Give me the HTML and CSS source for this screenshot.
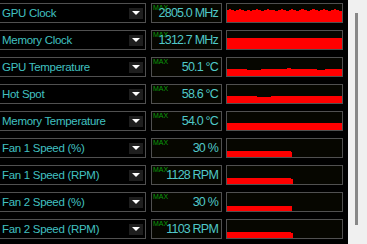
FILE: index.html
```html
<!DOCTYPE html>
<html>
<head>
<meta charset="utf-8">
<link rel="stylesheet" href="styles.css">
</head>
<body>
<div class="panel">
  <div class="row">
    <div class="label"><span>GPU Clock</span><span class="drop"><i></i></span></div>
    <div class="value"><span class="max">MAX</span><span class="num">2805.0 MHz</span></div>
    <div class="graph"><svg viewBox="0 0 115 18" width="115" height="18"><path d="M0 18V6H2V5H4V6H7V7H9V6H12V5H14V6H17V7H20V6H23V7H25V6H29V5H31V6H34V7H37V6H40V5H42V6H45V6H48V7H51V6H54V5H56V6H59V7H62V6H64V5H66V6H69V7H72V6H74V5H77V6H80V7H83V6H85V5H88V6H91V7H93V6H96V5H98V6H101V7H104V6H107V5H109V6H112V7H115V18Z" fill="#ff0000"/></svg></div>
  </div>
  <div class="row">
    <div class="label"><span>Memory Clock</span><span class="drop"><i></i></span></div>
    <div class="value"><span class="max">MAX</span><span class="num">1312.7 MHz</span></div>
    <div class="graph"><svg viewBox="0 0 115 18" width="115" height="18"><rect x="0" y="7" width="115" height="11" fill="#ff0000"/></svg></div>
  </div>
  <div class="row">
    <div class="label"><span>GPU Temperature</span><span class="drop"><i></i></span></div>
    <div class="value"><span class="max">MAX</span><span class="num">50.1 °C</span></div>
    <div class="graph"><svg viewBox="0 0 115 18" width="115" height="18"><path d="M0 18V11H20V12H34V11H60V10H64V11H90V12H98V11H115V18Z" fill="#ff0000"/></svg></div>
  </div>
  <div class="row">
    <div class="label"><span>Hot Spot</span><span class="drop"><i></i></span></div>
    <div class="value"><span class="max">MAX</span><span class="num">58.6 °C</span></div>
    <div class="graph"><svg viewBox="0 0 115 18" width="115" height="18"><path d="M0 18V11H30V12H44V11H115V18Z" fill="#ff0000"/></svg></div>
  </div>
  <div class="row">
    <div class="label"><span>Memory Temperature</span><span class="drop"><i></i></span></div>
    <div class="value"><span class="max">MAX</span><span class="num">54.0 °C</span></div>
    <div class="graph"><svg viewBox="0 0 115 18" width="115" height="18"><path d="M0 18V11H115V18Z" fill="#ff0000"/></svg></div>
  </div>
  <div class="row">
    <div class="label"><span>Fan 1 Speed (%)</span><span class="drop"><i></i></span></div>
    <div class="value"><span class="max">MAX</span><span class="num">30 %</span></div>
    <div class="graph"><svg viewBox="0 0 115 18" width="115" height="18"><path d="M0 18V12H64V13H65V18Z" fill="#ff0000"/></svg></div>
  </div>
  <div class="row">
    <div class="label"><span>Fan 1 Speed (RPM)</span><span class="drop"><i></i></span></div>
    <div class="value"><span class="max">MAX</span><span class="num">1128 RPM</span></div>
    <div class="graph"><svg viewBox="0 0 115 18" width="115" height="18"><path d="M0 18V12H64V13H66V18Z" fill="#ff0000"/></svg></div>
  </div>
  <div class="row">
    <div class="label"><span>Fan 2 Speed (%)</span><span class="drop"><i></i></span></div>
    <div class="value"><span class="max">MAX</span><span class="num">30 %</span></div>
    <div class="graph"><svg viewBox="0 0 115 18" width="115" height="18"><path d="M0 18V13H65V18Z" fill="#ff0000"/></svg></div>
  </div>
  <div class="row">
    <div class="label"><span>Fan 2 Speed (RPM)</span><span class="drop"><i></i></span></div>
    <div class="value"><span class="max">MAX</span><span class="num">1103 RPM</span></div>
    <div class="graph"><svg viewBox="0 0 115 18" width="115" height="18"><path d="M0 18V12H64V13H66V18Z" fill="#ff0000"/></svg></div>
  </div>
</div>
<div class="scrollbar"><div class="thumb"></div></div>
</body>
</html>
```
FILE: styles.css
```css
html, body {
  margin: 0;
  padding: 0;
  background: #000;
  height: 100%;
  overflow: hidden;
}
body {
  display: flex;
  font-family: "Liberation Sans", Arial, sans-serif;
}
.panel {
  width: 348px;
  padding-top: 3px;
  display: flex;
  flex-direction: column;
  gap: 7px;
}
.row {
  display: flex;
  height: 20px;
}
.label {
  box-sizing: border-box;
  width: 148px;
  margin-left: -2px;
  height: 20px;
  border: 1px solid #505050;
  padding-left: 3px;
  padding-right: 2px;
  display: flex;
  align-items: center;
  justify-content: space-between;
  color: #40c0c0;
  font-size: 11.5px;
  letter-spacing: -0.3px;
  white-space: nowrap;
}
.drop {
  width: 14px;
  height: 11px;
  background: #1e1e1e;
  display: flex;
  align-items: center;
  justify-content: center;
}
.drop i {
  width: 0;
  height: 0;
  border-left: 4px solid transparent;
  border-right: 4px solid transparent;
  border-top: 4px solid #fff;
}
.value {
  box-sizing: border-box;
  position: relative;
  width: 71px;
  height: 20px;
  margin-left: 5px;
  border: 1px solid #505050;
  background: #060600;
  display: flex;
  align-items: center;
  justify-content: flex-end;
  padding-right: 3px;
  white-space: nowrap;
}
.max {
  position: absolute;
  left: 1px;
  top: 0px;
  font-size: 7px;
  color: #0a9a0a;
  line-height: 8px;
}
.num {
  position: relative;
  color: #50c8c8;
  font-size: 12.5px;
  letter-spacing: -0.8px;
}
.graph {
  box-sizing: border-box;
  width: 117px;
  height: 20px;
  margin-left: 4px;
  border: 1px solid #505050;
  background: #060600;
}
.graph svg {
  display: block;
}
.scrollbar {
  width: 19px;
  background: #f0f0f0;
  position: relative;
}
.thumb {
  position: absolute;
  left: 7px;
  top: 13px;
  width: 3px;
  height: 212px;
  background: #888;
}
```
